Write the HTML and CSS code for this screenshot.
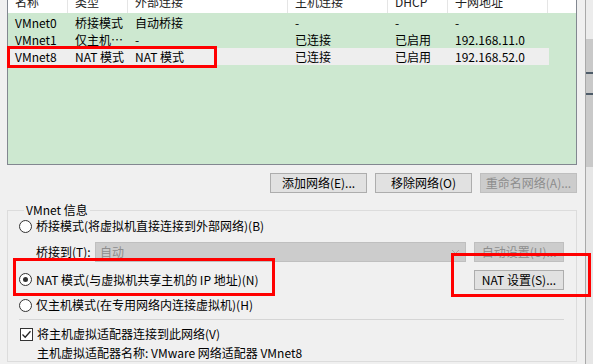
FILE: index.html
```html
<!DOCTYPE html>
<html lang="zh-CN">
<head>
    <meta charset="UTF-8">
    <meta name="viewport" content="width=device-width, initial-scale=1.0">
    <title>虚拟网络编辑器</title>

    <link rel="stylesheet" href="styles.css">
</head>
<body>
    <div id="dialog">
        <div id="netlist">
            <div class="hdr">
                <div class="hc w60">名称</div>
                <div class="hc w60">类型</div>
                <div class="hc w160">外部连接</div>
                <div class="hc w100">主机连接</div>
                <div class="hc w60">DHCP</div>
                <div class="hc w100">子网地址</div>
                <div class="hc fill"></div>
            </div>
            <div class="row">
                <div>VMnet0</div><div>桥接模式</div><div>自动桥接</div><div>-</div><div>-</div><div>-</div>
            </div>
            <div class="row">
                <div>VMnet1</div><div>仅主机…</div><div>-</div><div>已连接</div><div>已启用</div><div>192.168.11.0</div>
            </div>
            <div class="row sel">
                <div>VMnet8</div><div>NAT 模式</div><div>NAT 模式</div><div>已连接</div><div>已启用</div><div>192.168.52.0</div>
            </div>
        </div>

        <div class="btnrow">
            <button class="bots">添加网络(E)...</button>
            <button class="bots">移除网络(O)</button>
            <button class="bots off">重命名网络(A)...</button>
        </div>

        <fieldset id="info">
            <legend>VMnet 信息</legend>
            <div class="opt">
                <span class="radio"></span>
                <span>桥接模式(将虚拟机直接连接到外部网络)(B)</span>
            </div>
            <div class="bridge">
                <span class="lbl">桥接到(T):</span>
                <div class="combo">
                    <span>自动</span>
                    <svg width="9" height="6" viewBox="0 0 9 6"><path d="M1 1 L4.5 4.5 L8 1" fill="none" stroke="#a8a8a8" stroke-width="1"/></svg>
                </div>
                <button class="bots off small">自动设置(U)...</button>
            </div>
            <div class="opt nat">
                <span class="radio on"></span>
                <span>NAT 模式(与虚拟机共享主机的 IP 地址)(N)</span>
                <button class="bots small push">NAT 设置(S)...</button>
            </div>
            <div class="opt host">
                <span class="radio"></span>
                <span>仅主机模式(在专用网络内连接虚拟机)(H)</span>
            </div>
            <div class="sep"></div>
            <div class="opt chk">
                <span class="box">
                    <svg width="11" height="11" viewBox="0 0 11 11"><path d="M1.5 5.5 L4.2 8.2 L9.5 2.2" fill="none" stroke="#222" stroke-width="1.3"/></svg>
                </span>
                <span>将主机虚拟适配器连接到此网络(V)</span>
            </div>
            <div class="adapter">主机虚拟适配器名称: VMware 网络适配器 VMnet8</div>
        </fieldset>
    </div>
    <div id="behind"></div>

    <div class="mark m1"></div>
    <div class="mark m2"></div>
    <div class="mark m3"></div>
</body>
</html>
```

FILE: styles.css
```css
*{
    box-sizing: border-box;
}
body{
    margin: 0;
    position: relative;
    width: 593px;
    height: 364px;
    overflow: hidden;
    display: flex;
    background: #f0f0f0;
    font-family: "Noto Sans CJK SC", "Liberation Sans", sans-serif;
    font-size: 12px;
    line-height: 16px;
    color: #000;
}
#dialog{
    width: 586px;
    padding: 0 9px 0 7px;
    border-right: 1px solid #a9a9a9;
    flex-shrink: 0;
}
#behind{
    flex: 1;
    background: linear-gradient(#ececec 0 39px, #c9c9c9 39px 72px, #4d5b68 72px 74px, #c9c9c9 74px 93px, #4d5b68 93px 95px, #c9c9c9 95px 167px, #e6e6e6 167px);
}

/* network list */
#netlist{
    margin-top: -11px;
    width: 570px;
    height: 176px;
    border: 1px solid #828790;
    background: #cde8d0;
}
.hdr{
    display: flex;
    height: 23px;
    background: #fff;
    margin-bottom: 1px;
}
.hc{
    padding-left: 7px;
    line-height: 23px;
    border-right: 1px solid #e5e5e5;
    color: #222;
}
.w60{ width: 60px; }
.w100{ width: 100px; }
.w160{ width: 160px; }
.fill{ flex: 1; border-right: none; }
.row{
    display: grid;
    grid-template-columns: 60px 60px 160px 100px 60px 100px;
    width: 541px;
    height: 17px;
    line-height: 17px;
}
.row div{
    padding-left: 7px;
    white-space: nowrap;
    overflow: hidden;
}
.row.sel{
    background: #eeeeee;
}

/* buttons */
.btnrow{
    display: flex;
    justify-content: flex-end;
    gap: 8px;
    margin-top: 8px;
    width: 570px;
}
.bots{
    width: 97px;
    height: 20px;
    padding: 0;
    font-family: inherit;
    font-size: 12px;
    line-height: 16px;
    color: #000;
    background: #e1e1e1;
    border: 1px solid #adadad;
    border-radius: 0;
}
.bots.off{
    color: #8d8d8d;
    background: #cccccc;
    border-color: #bfbfbf;
}
.bots.small{
    width: 90px;
}

/* group box */
#info{
    margin: 9px 0 0 0;
    width: 570px;
    padding: 0 12px 0 11px;
    border: 1px solid #dcdcdc;
    min-inline-size: 0;
}
#info legend{
    margin-left: 5px;
    padding: 0 2px;
    line-height: 16px;
}
.opt{
    display: flex;
    align-items: center;
    gap: 4px;
    height: 16px;
}
.radio{
    width: 13px;
    height: 13px;
    border: 1px solid #333;
    border-radius: 50%;
    background: #fff;
    display: flex;
    align-items: center;
    justify-content: center;
}
.radio.on::after{
    content: "";
    width: 5px;
    height: 5px;
    border-radius: 50%;
    background: #333;
}
.bridge{
    display: flex;
    align-items: center;
    height: 20px;
    margin-top: 8px;
    padding-left: 17px;
}
.lbl{
    width: 59px;
}
.combo{
    width: 372px;
    height: 20px;
    background: #cccccc;
    border: 1px solid #bfbfbf;
    color: #8d8d8d;
    display: flex;
    align-items: center;
    justify-content: space-between;
    padding: 0 5px 0 4px;
    margin-right: 8px;
}
.nat{
    height: 21px;
    margin-top: 7px;
}
.push{
    margin-left: auto;
}
.host{
    margin-top: 7px;
}
.sep{
    height: 1px;
    margin: 6px 0 6px 0;
    background: #d5d5d5;
}
.box{
    width: 13px;
    height: 13px;
    border: 1px solid #333;
    background: #fff;
    display: flex;
    align-items: center;
    justify-content: center;
    margin-left: 1px;
}
.adapter{
    margin-top: 3px;
    padding-left: 18px;
    height: 16px;
    white-space: nowrap;
}

/* red highlight marks */
.mark{
    position: absolute;
    border: 3px solid #ff0000;
}
.m1{ left: 7px; top: 46px; width: 210px; height: 22px; }
.m2{ left: 13px; top: 258px; width: 262px; height: 38px; }
.m3{ left: 451px; top: 253px; width: 140px; height: 44px; }
```
